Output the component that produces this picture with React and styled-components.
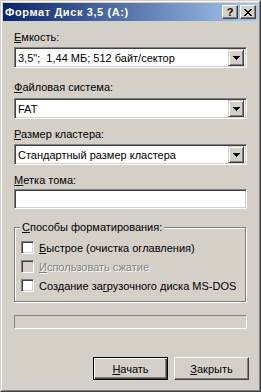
import React from "react";
import styled, { createGlobalStyle } from "styled-components";

const Global = createGlobalStyle`
  html, body {
    margin: 0;
    padding: 0;
    background: #d4d0c8;
  }
  body {
    font-family: "Liberation Sans", Arial, sans-serif;
    font-size: 11px;
    color: #000;
  }
`;

const Window = styled.div`
  width: 261px;
  height: 392px;
  box-sizing: border-box;
  border: 1px solid;
  border-color: #d4d0c8 #404040 #404040 #d4d0c8;
  background: #d4d0c8;
  display: flex;
  flex-direction: column;
`;

const Frame = styled.div`
  flex: 1;
  border: 1px solid;
  border-color: #fff #808080 #808080 #fff;
  padding: 1px;
  display: flex;
  flex-direction: column;
`;

const TitleBar = styled.div`
  height: 18px;
  flex: none;
  display: flex;
  align-items: center;
  padding: 0 2px 0 2px;
  background: linear-gradient(to right, #0a246a, #a6caf0);
`;

const Title = styled.div`
  flex: 1;
  color: #fff;
  font-weight: bold;
  font-size: 11px;
  letter-spacing: 0.6px;
  white-space: nowrap;
`;

const CaptionButtons = styled.div`
  display: flex;
  gap: 2px;
`;

const CaptionButton = styled.div`
  width: 16px;
  height: 14px;
  box-sizing: border-box;
  background: #d4d0c8;
  border: 1px solid;
  border-color: #fff #404040 #404040 #fff;
  box-shadow: inset -1px -1px 0 #808080;
  display: flex;
  align-items: center;
  justify-content: center;
  font-weight: bold;
  font-size: 11px;
  line-height: 11px;
`;

const Body = styled.div`
  display: flex;
  flex-direction: column;
  padding: 0 11px;
`;

const Label = styled.div`
  height: 13px;
  line-height: 13px;
  margin-top: ${(p) => p.$mt}px;
  white-space: nowrap;
`;

const Sunken = styled.div`
  box-sizing: border-box;
  border: 1px solid;
  border-color: #808080 #fff #fff #808080;
  box-shadow: inset 1px 1px 0 #404040, inset -1px -1px 0 #d4d0c8;
  background: #fff;
`;

const Combo = styled(Sunken)`
  height: 21px;
  margin-top: ${(p) => p.$mt}px;
  display: flex;
  align-items: center;
  padding: 2px;
`;

const ComboText = styled.div`
  flex: 1;
  padding-left: 1px;
  white-space: nowrap;
  overflow: hidden;
`;

const ArrowButton = styled.div`
  width: 16px;
  height: 17px;
  box-sizing: border-box;
  background: #d4d0c8;
  border: 1px solid;
  border-color: #d4d0c8 #404040 #404040 #d4d0c8;
  box-shadow: inset 1px 1px 0 #fff, inset -1px -1px 0 #808080;
  display: flex;
  align-items: center;
  justify-content: center;
`;

const TextField = styled(Sunken)`
  height: 20px;
  margin-top: ${(p) => p.$mt}px;
`;

const Group = styled.div`
  position: relative;
  margin-top: ${(p) => p.$mt}px;
  height: 75px;
  box-sizing: border-box;
  border: 1px solid #808080;
  box-shadow: inset 1px 1px 0 #fff, 1px 1px 0 #fff;
  margin-right: 1px;
  padding: 13px 0 0 6px;
  display: flex;
  flex-direction: column;
  gap: 6px;
`;

const Legend = styled.div`
  position: absolute;
  top: -7px;
  left: 5px;
  padding: 0 2px;
  background: #d4d0c8;
  line-height: 13px;
`;

const CheckRow = styled.div`
  display: flex;
  align-items: center;
  gap: 5px;
  height: 13px;
  color: ${(p) => (p.$disabled ? "#808080" : "#000")};
  text-shadow: ${(p) => (p.$disabled ? "1px 1px 0 #fff" : "none")};
  white-space: nowrap;
`;

const CheckBox = styled.div`
  width: 13px;
  height: 13px;
  box-sizing: border-box;
  border: 1px solid;
  border-color: #808080 #fff #fff #808080;
  box-shadow: inset 1px 1px 0 #404040, inset -1px -1px 0 #d4d0c8;
  background: ${(p) => (p.$disabled ? "#d4d0c8" : "#fff")};
  flex: none;
`;

const Progress = styled.div`
  margin-top: ${(p) => p.$mt}px;
  height: 14px;
  box-sizing: border-box;
  border: 1px solid;
  border-color: #808080 #fff #fff #808080;
`;

const ButtonRow = styled.div`
  margin-top: ${(p) => p.$mt}px;
  display: flex;
  justify-content: flex-end;
  gap: 6px;
  margin-right: -2px;
`;

const Button = styled.div`
  width: 75px;
  height: 23px;
  flex: none;
  box-sizing: border-box;
  background: #d4d0c8;
  display: flex;
  align-items: center;
  justify-content: center;
  border: 1px solid;
  border-color: ${(p) => (p.$default ? "#000" : "#fff #404040 #404040 #fff")};
  box-shadow: ${(p) =>
    p.$default
      ? "inset 1px 1px 0 #fff, inset -1px -1px 0 #404040, inset -2px -2px 0 #808080"
      : "inset -1px -1px 0 #808080"};
`;

const Key = styled.span`
  text-decoration: underline;
  text-underline-offset: 1px;
`;

const DropArrow = () => (
  <svg width="7" height="4" viewBox="0 0 7 4">
    <path d="M0 0h7v1H0zM1 1h5v1H1zM2 2h3v1H2zM3 3h1v1H3z" fill="#000" />
  </svg>
);

const CloseGlyph = () => (
  <svg width="8" height="7" viewBox="0 0 8 7">
    <path
      d="M0 0h2v1H0zM6 0h2v1H6zM1 1h2v1H1zM5 1h2v1H5zM2 2h4v1H2zM3 3h2v1H3zM2 4h4v1H2zM1 5h2v1H1zM5 5h2v1H5zM0 6h2v1H0zM6 6h2v1H6z"
      fill="#000"
    />
  </svg>
);

const ComboBox = ({ mt, children }) => (
  <Combo $mt={mt}>
    <ComboText>{children}</ComboText>
    <ArrowButton>
      <DropArrow />
    </ArrowButton>
  </Combo>
);

export default function App() {
  return (
    <>
      <Global />
      <Window>
        <Frame>
          <TitleBar>
            <Title>Формат Диск 3,5 (A:)</Title>
            <CaptionButtons>
              <CaptionButton>?</CaptionButton>
              <CaptionButton>
                <CloseGlyph />
              </CaptionButton>
            </CaptionButtons>
          </TitleBar>
          <Body>
            <Label $mt={10}>
              <Key>Е</Key>мкость:
            </Label>
            <ComboBox mt={3}>3,5";&nbsp; 1,44 МБ; 512 байт/сектор</ComboBox>
            <Label $mt={13}>
              <Key>Ф</Key>айловая система:
            </Label>
            <ComboBox mt={4}>FAT</ComboBox>
            <Label $mt={9}>
              <Key>Р</Key>азмер кластера:
            </Label>
            <ComboBox mt={3}>Стандартный размер кластера</ComboBox>
            <Label $mt={9}>
              <Key>М</Key>етка тома:
            </Label>
            <TextField $mt={2} />
            <Group $mt={18}>
              <Legend>
                <Key>С</Key>пособы форматирования:
              </Legend>
              <CheckRow>
                <CheckBox />
                <span>
                  <Key>Б</Key>ыстрое (очистка оглавления)
                </span>
              </CheckRow>
              <CheckRow $disabled>
                <CheckBox $disabled />
                <span>
                  <Key>И</Key>спользовать сжатие
                </span>
              </CheckRow>
              <CheckRow>
                <CheckBox />
                <span>
                  Создание за<Key>г</Key>рузочного диска MS-DOS
                </span>
              </CheckRow>
            </Group>
            <Progress $mt={13} />
            <ButtonRow $mt={28}>
              <Button $default>
                <span>
                  <Key>Н</Key>ачать
                </span>
              </Button>
              <Button>
                <span>
                  <Key>З</Key>акрыть
                </span>
              </Button>
            </ButtonRow>
          </Body>
        </Frame>
      </Window>
    </>
  );
}
